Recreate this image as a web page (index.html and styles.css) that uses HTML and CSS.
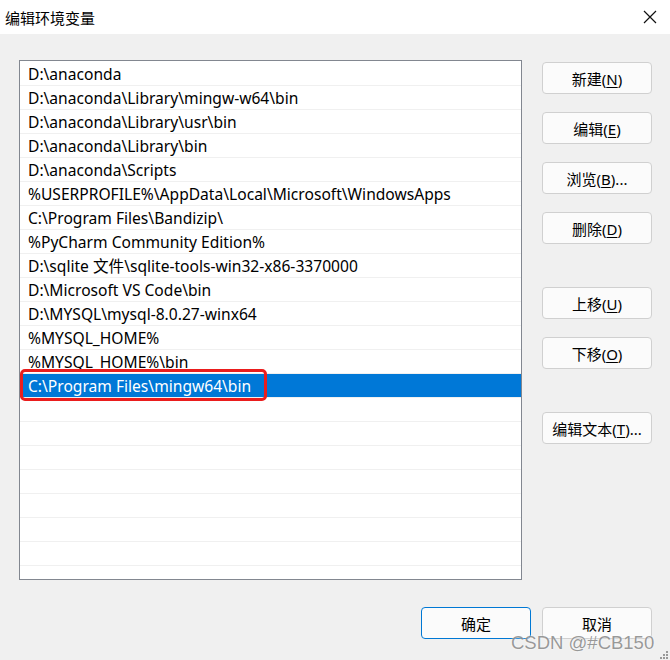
FILE: index.html
```html
<!DOCTYPE html>
<html lang="zh-CN">
<head>
    <meta charset="UTF-8">
    <title>编辑环境变量</title>
    <link rel="stylesheet" href="styles.css">
</head>
<body>
    <div class="window">
        <div class="titlebar">
            <span class="title">编辑环境变量</span>
            <svg class="close" width="14" height="14" viewBox="0 0 14 14">
                <path d="M1 1 L13 13 M13 1 L1 13" stroke="#111" stroke-width="1.2" fill="none"/>
            </svg>
        </div>

        <div class="content">
            <div class="path-list">
                <div class="row">D:\anaconda</div>
                <div class="row">D:\anaconda\Library\mingw-w64\bin</div>
                <div class="row">D:\anaconda\Library\usr\bin</div>
                <div class="row">D:\anaconda\Library\bin</div>
                <div class="row">D:\anaconda\Scripts</div>
                <div class="row">%USERPROFILE%\AppData\Local\Microsoft\WindowsApps</div>
                <div class="row">C:\Program Files\Bandizip\</div>
                <div class="row">%PyCharm Community Edition%</div>
                <div class="row">D:\sqlite 文件\sqlite-tools-win32-x86-3370000</div>
                <div class="row">D:\Microsoft VS Code\bin</div>
                <div class="row">D:\MYSQL\mysql-8.0.27-winx64</div>
                <div class="row">%MYSQL_HOME%</div>
                <div class="row">%MYSQL_HOME%\bin</div>
                <div class="row selected">C:\Program Files\mingw64\bin</div>
                <div class="row"></div>
                <div class="row"></div>
                <div class="row"></div>
                <div class="row"></div>
                <div class="row"></div>
                <div class="row"></div>
                <div class="row"></div>
            </div>

            <div class="side-buttons">
                <button class="btn">新建(<u>N</u>)</button>
                <button class="btn">编辑(<u>E</u>)</button>
                <button class="btn">浏览(<u>B</u>)...</button>
                <button class="btn">删除(<u>D</u>)</button>
                <button class="btn group">上移(<u>U</u>)</button>
                <button class="btn">下移(<u>O</u>)</button>
                <button class="btn group">编辑文本(<u>T</u>)...</button>
            </div>
        </div>

        <div class="footer">
            <button class="btn default">确定</button>
            <button class="btn">取消</button>
        </div>

        <div class="watermark">CSDN @#CB150</div>
        <svg class="grip" width="10" height="10" viewBox="0 0 10 10">
            <rect x="7" y="1" width="2" height="2" fill="#999"/>
            <rect x="4" y="4" width="2" height="2" fill="#999"/>
            <rect x="7" y="4" width="2" height="2" fill="#999"/>
            <rect x="1" y="7" width="2" height="2" fill="#999"/>
            <rect x="4" y="7" width="2" height="2" fill="#999"/>
            <rect x="7" y="7" width="2" height="2" fill="#999"/>
        </svg>
    </div>
</body>
</html>
```

FILE: styles.css
```css
body {
    margin: 0;
    padding: 0;
    background-color: #f0f0f0;
    font-family: "Noto Sans", "Noto Sans CJK SC", sans-serif;
    font-size: 15.6px;
    color: #000;
}
.window {
    position: relative;
    width: 670px;
    height: 660px;
    overflow: hidden;
}
.titlebar {
    height: 34px;
    background-color: #fff;
    display: flex;
    align-items: center;
    justify-content: space-between;
    padding: 0 13px 0 5px;
}
.title {
    font-family: "Noto Sans CJK SC", sans-serif;
    font-size: 15px;
}
.content {
    display: flex;
    gap: 20px;
    padding: 26px 0 0 19px;
}
/* list of paths */
.path-list {
    width: 501px;
    height: 517px;
    border: 1px solid #828790;
    background-color: #fff;
    padding-top: 1px;
    box-sizing: content-box;
    overflow: hidden;
}
.row {
    position: relative;
    height: 23px;
    line-height: 25px;
    border-bottom: 1px solid #f0f0f0;
    padding-left: 8px;
    white-space: nowrap;
    overflow: visible;
}
.row.selected {
    background-color: #0078d7;
    color: #fff;
}
.row.selected::after {
    content: "";
    position: absolute;
    left: 0;
    top: -5px;
    width: 241px;
    height: 26px;
    border: 3px solid #ea1d1d;
    border-radius: 5px;
}
/* buttons */
.side-buttons {
    display: flex;
    flex-direction: column;
    gap: 18px;
    margin-top: 2px;
}
.btn {
    width: 110px;
    height: 32px;
    background-color: #fbfbfb;
    border: 1px solid #d0d0d0;
    border-radius: 4px;
    font-family: "Noto Sans", "Noto Sans CJK SC", sans-serif;
    font-size: 15px;
    color: #000;
    padding: 0;
}
.btn u {
    text-underline-offset: 2px;
}
.btn.group {
    margin-top: 25px;
}
.btn.default {
    border-color: #0078d4;
}
.footer {
    display: flex;
    justify-content: flex-end;
    gap: 11px;
    padding: 27px 18px 0 0;
}
.watermark {
    position: absolute;
    left: 511px;
    top: 632px;
    font-family: "Liberation Sans", sans-serif;
    font-size: 18.5px;
    color: rgba(120, 120, 120, 0.75);
    text-shadow: 0 0 2px #fff;
}
.grip {
    position: absolute;
    right: 1px;
    bottom: 0;
}
```
